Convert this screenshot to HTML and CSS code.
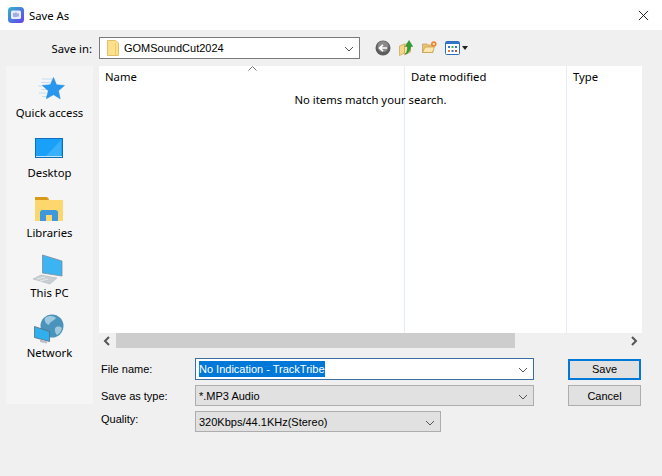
FILE: index.html
```html
<!DOCTYPE html>
<html lang="en">
<head>
<meta charset="utf-8">
<title>Save As</title>
<link rel="stylesheet" href="styles.css">
</head>
<body>
<div class="dialog">
  <header class="titlebar">
    <svg class="app-icon" viewBox="0 0 16 16"><defs><linearGradient id="ag" x1="0" y1="0" x2="1" y2="1"><stop offset="0" stop-color="#2fb7c9"/><stop offset="1" stop-color="#6a3df0"/></linearGradient></defs><rect width="16" height="16" rx="3.5" fill="url(#ag)"/><rect x="3" y="3.5" width="10" height="8.5" rx="1.5" fill="#e8ecfa"/><path d="M6 6v4M8 5.5v4.5M10 6.5v3" stroke="#5a6fd0" stroke-width="1"/></svg>
    <span class="title">Save As</span>
    <svg class="close" viewBox="0 0 12 12"><path d="M1 1l10 10M11 1L1 11" stroke="#111" stroke-width="1" fill="none"/></svg>
  </header>
  <div class="toolbar">
    <label class="savein">Save in:</label>
    <div class="combo folder-combo">
      <svg class="small-folder" viewBox="0 0 12 16"><path d="M.5.500h8l3 2.500v12.500H.5z" fill="#fde08a" stroke="#e2c06a"/><path d="M8.500 3v12" stroke="#f0cc70"/></svg>
      <span class="combo-text">GOMSoundCut2024</span>
      <svg class="chev" viewBox="0 0 10 6"><path d="M1 1l4 4 4-4" fill="none" stroke="#555" stroke-width="1"/></svg>
    </div>
    <div class="tools">
      <svg class="tool-back" viewBox="0 0 16 16"><circle cx="8" cy="8" r="7.500" fill="#5d5d5d"/><circle cx="8" cy="6.500" r="5.500" fill="#8a8a8a"/><path d="M12 8H5M8 4.800L4.600 8 8 11.200" fill="none" stroke="#fff" stroke-width="1.700"/></svg>
      <svg class="tool-up" viewBox="0 0 14 16"><path d="M.5 6l5-2v9L.5 15.500z" fill="#f6d68a" stroke="#c9a04e" stroke-width=".7"/><path d="M5.500 4h6v8l-6 3z" fill="#fbe6ab" stroke="#c9a04e" stroke-width=".7"/><path d="M6 14c2-1 2.500-4 2.500-7.500H6.300L10 .5l3.700 6h-2.200c0 4-2 7-5.500 7.500z" fill="#2f9e36" stroke="#1f7d28" stroke-width=".5"/></svg>
      <svg class="tool-new" viewBox="0 0 15 12"><path d="M.5 11.500V3h4.500l1 1h5v7.500z" fill="#e9c675" stroke="#bf9a4d" stroke-width=".7"/><path d="M.5 11.500l2.500-5.500h9.500l-2 5.500z" fill="#fbe6ab" stroke="#bf9a4d" stroke-width=".7"/><circle cx="11.800" cy="3" r="2.700" fill="#f07a2c"/><circle cx="11.800" cy="3" r="1.200" fill="#ffe9a0"/></svg>
      <div class="tool-view">
        <svg class="view-icon" viewBox="0 0 15 14"><rect x=".5" y=".5" width="14" height="13" rx="1" fill="#fff" stroke="#2f6fb8"/><rect x="1" y="1" width="13" height="2" fill="#2f78c8"/><path d="M3 5h2v2H3z" fill="#3477c0"/><path d="M6.500 5h2v2h-2z" fill="#3faa55"/><path d="M10 5h2v2h-2z" fill="#3477c0"/><path d="M3 9h2v2H3z" fill="#e07b30"/><path d="M6.500 9h2v2h-2z" fill="#3477c0"/><path d="M10 9h2v2h-2z" fill="#d04a3a"/></svg>
        <span class="view-caret"></span>
      </div>
    </div>
  </div>
  <div class="body">
    <nav class="places">
      <div class="place">
        <svg class="place-icon" viewBox="0 0 32 32"><path d="M9 5h10M8 8.500h9M5 12h11M8 15.500h6M6 19h7M9 22.500h5" stroke="#c3dcf1" stroke-width="1"/><path d="M20.500 3.500l3 7.300 8 .7-6 5.300 1.700 8-6.700-4.100-7.200 4 2-8-6-5.300 8-.7z" fill="#2a97ee" stroke="#1f86dc" stroke-width=".5"/></svg>
        <span>Quick access</span>
      </div>
      <div class="place">
        <svg class="place-icon" viewBox="0 0 32 32"><rect x="2.500" y="4.500" width="27" height="19" fill="#1aa0f8" stroke="#0f6fb8"/><path d="M12 23L28 6v17z" fill="#38b0fb"/><path d="M3 22.500h26" stroke="#bfe4fb"/></svg>
        <span>Desktop</span>
      </div>
      <div class="place">
        <svg class="place-icon" viewBox="0 0 32 32"><path d="M2 3h12l2 2v4H2z" fill="#d99a1a"/><path d="M2 6h28v21H2z" fill="#fbd76e"/><path d="M2 6h12l2-1.500V6z" fill="#e8ad2a"/><path d="M7 27V17.500l2-1.500h14l2 1.500V27h-6v-6h-6v6z" fill="#3f97dc"/></svg>
        <span>Libraries</span>
      </div>
      <div class="place">
        <svg class="place-icon" viewBox="0 0 32 32"><path d="M10.500 1l19.500 6v15l-19.500-3z" fill="#3cb4f2" stroke="#7a8b99" stroke-width=".8"/><path d="M1 25l8-4 16 3-7 6z" fill="#c9ced3" stroke="#aab0b5" stroke-width=".5"/><path d="M5 25l8-2M8 27l8-2" stroke="#eef0f2" stroke-width=".8"/></svg>
        <span>This PC</span>
      </div>
      <div class="place">
        <svg class="place-icon" viewBox="0 0 32 32"><circle cx="20" cy="12" r="11.500" fill="#4a94bb"/><path d="M13 4c4-3 9-2 11 0-2 3-6 3-7 7-3-1-5-4-4-7zM24 13c3-1 5 0 6 1-1 4-3 6-5 7-2-2-3-6-1-8z" fill="#9ec9df"/><path d="M2.500 12.500l15 5v10l-15-4z" fill="#2fb0ee" stroke="#5a6a78" stroke-width=".8"/><path d="M8 25.500l7 2v2l-7-1.500z" fill="#b8bfc5"/></svg>
        <span>Network</span>
      </div>
    </nav>
    <main class="content">
      <section class="list">
        <div class="col col-name"><span class="col-head">Name</span><svg class="sort-caret" viewBox="0 0 9 5"><path d="M.5 4.500l4-4 4 4" fill="none" stroke="#777" stroke-width="1"/></svg></div>
        <div class="col col-date"><span class="col-head">Date modified</span></div>
        <div class="col col-type"><span class="col-head">Type</span></div>
        <p class="empty">No items match your search.</p>
      </section>
      <div class="hscroll">
        <svg class="arrow arrow-left" viewBox="0 0 8 10"><path d="M6 1L2 5l4 4" fill="none" stroke="#555" stroke-width="2"/></svg>
        <div class="track"><div class="thumb"></div></div>
        <svg class="arrow" viewBox="0 0 8 10"><path d="M2 1l4 4-4 4" fill="none" stroke="#555" stroke-width="2"/></svg>
      </div>
      <div class="form">
        <label class="lbl">File name:</label>
        <div class="combo input-combo"><span class="selected">No Indication - TrackTribe</span><svg class="chev" viewBox="0 0 10 6"><path d="M1 1l4 4 4-4" fill="none" stroke="#555" stroke-width="1"/></svg></div>
        <button class="btn btn-default">Save</button>
        <label class="lbl">Save as type:</label>
        <div class="combo grey-combo"><span class="combo-text">*.MP3 Audio</span><svg class="chev" viewBox="0 0 10 6"><path d="M1 1l4 4 4-4" fill="none" stroke="#555" stroke-width="1"/></svg></div>
        <button class="btn">Cancel</button>
        <label class="lbl lbl-quality">Quality:</label>
        <div class="combo grey-combo quality"><span class="combo-text">320Kbps/44.1KHz(Stereo)</span><svg class="chev" viewBox="0 0 10 6"><path d="M1 1l4 4 4-4" fill="none" stroke="#555" stroke-width="1"/></svg></div>
      </div>
    </main>
  </div>
</div>
</body>
</html>
```
FILE: styles.css
```css
* { box-sizing: border-box; }
html, body { margin: 0; padding: 0; }
body { width: 662px; height: 476px; overflow: hidden; background: #f0f0f0; color: #000; font-family: "Noto Sans", "Open Sans", sans-serif; font-size: 11.3px; }
.dialog { display: flex; flex-direction: column; height: 476px; }
.titlebar { height: 30px; background: #fff; display: flex; align-items: center; padding: 0 13px 0 8px; }
.app-icon { width: 16px; height: 16px; }
.title { margin-left: 5px; flex: 1; }
.close { width: 11px; height: 11px; }
.toolbar { height: 36px; display: flex; align-items: center; }
.savein { width: 92px; text-align: right; }
.combo { border: 1px solid #adadad; display: flex; align-items: center; background: #e1e1e1; height: 22px; position: relative; }
.combo .chev { width: 10px; height: 6px; position: absolute; right: 5px; top: 8px; }
.folder-combo { margin-left: 7px; width: 261px; background: #fff; border-color: #7a7a7a; padding-left: 7px; font-family: "Liberation Sans", Arial, sans-serif; font-size: 11px; }
.small-folder { width: 12px; height: 16px; }
.combo-text { margin-left: 5px; white-space: nowrap; }
.grey-combo .combo-text { margin-left: 3px; }
.tools { display: flex; align-items: center; margin-left: 15px; }
.tool-back { width: 16px; height: 16px; }
.tool-up { width: 14px; height: 16px; margin-left: 8px; }
.tool-new { width: 15px; height: 12px; margin-left: 9px; margin-top: -2px; }
.tool-view { display: flex; align-items: center; margin-left: 8px; }
.view-icon { width: 15px; height: 14px; }
.view-caret { width: 0; height: 0; border: 3.500px solid transparent; border-top: 4px solid #222; border-bottom: 0; margin-left: 2px; }
.body { display: flex; padding-left: 6px; }
.places { width: 87px; height: 338px; background: #f5f5f5; display: flex; flex-direction: column; align-items: center; padding-top: 8px; }
.place { height: 60px; display: flex; flex-direction: column; align-items: center; }
.place-icon { width: 32px; height: 32px; margin-right: 2px; }
.place span { line-height: 16px; white-space: nowrap; margin-top: -1px; }
.content { margin-left: 6px; width: 543px; }
.list { height: 267px; background: #fff; display: grid; grid-template-columns: 305px 162px 76px; position: relative; }
.col { height: 267px; padding: 3px 0 0 6px; position: relative; }
.col-date, .col-type { border-left: 1px solid #e5eef7; }
.col-head { line-height: 16px; }
.sort-caret { position: absolute; left: 149px; top: 0; width: 9px; height: 5px; }
.empty { position: absolute; left: 0; right: 0; top: 26px; margin: 0; text-align: center; line-height: 16px; }
.hscroll { height: 15px; display: flex; align-items: center; }
.arrow { width: 8px; height: 10px; margin: 0 4px; }
.arrow-left { margin-right: 5px; }
.track { flex: 1; height: 15px; background: #f0f0f0; }
.thumb { width: 399px; height: 15px; background: #cdcdcd; }
.form { display: grid; grid-template-columns: 94px 339px 73px; grid-template-rows: 22px 21px 21px; row-gap: 5px; padding: 10px 0 0 2px; align-items: center; font-family: "Liberation Sans", Arial, sans-serif; font-size: 11px; }
.form .btn { margin-left: 34px; }
.lbl { white-space: nowrap; }
.lbl-quality { margin-top: -6px; }
.input-combo { background: #fff; border-color: #3a6ea5; padding-left: 3px; }
.selected { background: #0078d7; color: #fff; line-height: 16px; white-space: nowrap; }
.grey-combo { height: 21px; }
.quality { width: 246px; grid-column: 2; }
.btn { font: inherit; width: 73px; height: 21px; background: #e1e1e1; border: 1px solid #adadad; padding: 0; color: #000; }
.btn-default { border: 2px solid #0078d7; }
```
